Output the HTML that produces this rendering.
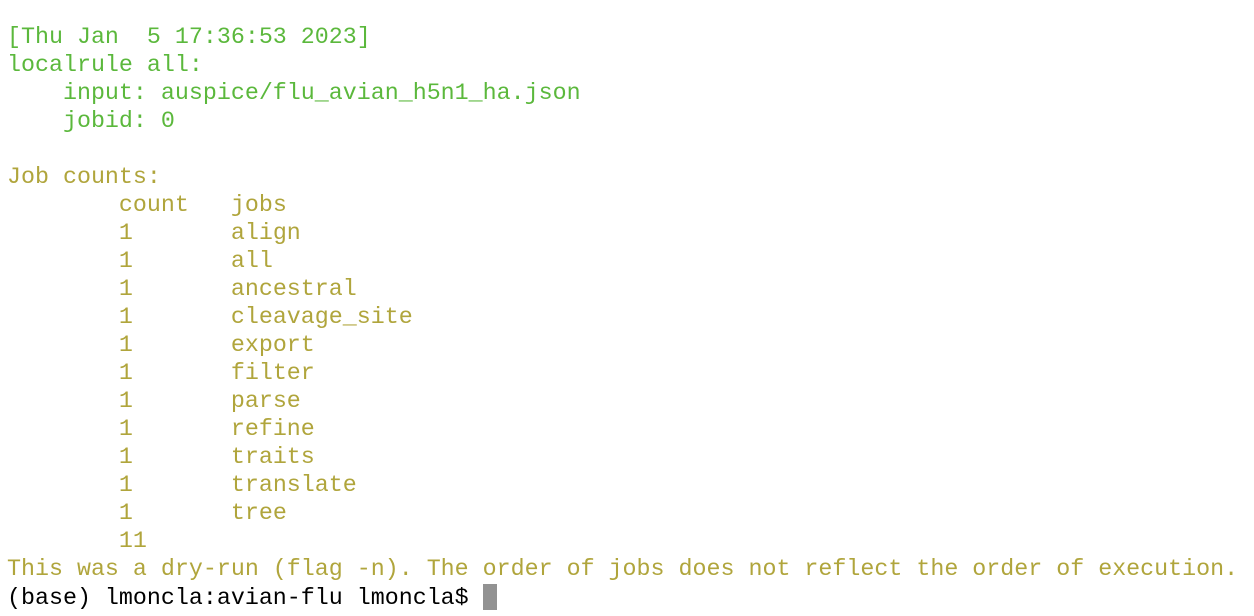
<!DOCTYPE html>
<html><head><style>
body{margin:0;background:#fff;width:1254px;height:616px;overflow:hidden}
pre{margin:0;position:absolute;left:7px;top:24px;font-family:"Liberation Mono",monospace;font-size:23.32px;line-height:28px;white-space:pre}
.g{color:#5bb83c}.y{color:#b0a53c}.k{color:#000}
.cur{display:inline-block;width:14px;height:26px;background:#929292;vertical-align:-6px}
</style></head><body>
<pre><span class="g">[Thu Jan  5 17:36:53 2023]
localrule all:
    input: auspice/flu_avian_h5n1_ha.json
    jobid: 0
</span>
<span class="y">Job counts:
	count	jobs
	1	align
	1	all
	1	ancestral
	1	cleavage_site
	1	export
	1	filter
	1	parse
	1	refine
	1	traits
	1	translate
	1	tree
	11
This was a dry-run (flag -n). The order of jobs does not reflect the order of execution.</span>
<span class="k">(base) lmoncla:avian-flu lmoncla$ <span class="cur"></span></span></pre>
</body></html>
